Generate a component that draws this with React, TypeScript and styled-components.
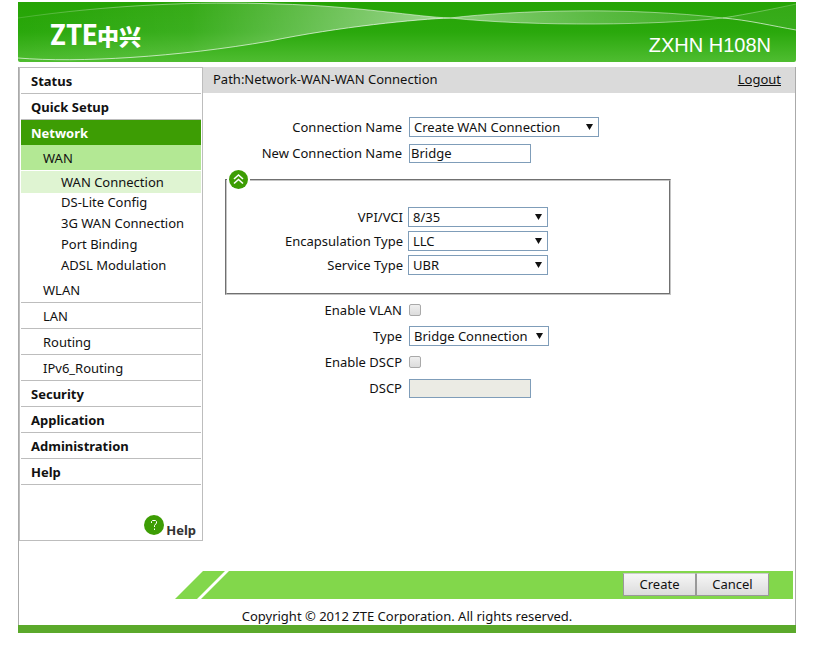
import React from "react";
import styled, { createGlobalStyle, css } from "styled-components";

const GlobalStyle = createGlobalStyle`
  * { box-sizing: border-box; }
  body {
    margin: 0;
    background: #fff;
    color: #111;
    font-family: "Noto Sans", sans-serif;
    font-size: 13px;
    line-height: 18px;
  }
  a { color: inherit; text-decoration: none; }
  ul { list-style: none; margin: 0; padding: 0; }
`;

const Page = styled.div`
  margin: 2px 17px 0 18px;
`;

const Banner = styled.header`
  display: flex;
  justify-content: space-between;
  align-items: flex-end;
  height: 60px;
  padding: 0 25px 0 32px;
  color: #fff;
  background: linear-gradient(#25a304, #2aa80c 50%, #4fbd31);
  border-radius: 0 0 2px 2px;
  position: relative;
  overflow: hidden;
`;

const Waves = styled.svg`
  position: absolute;
  inset: 0;
  width: 100%;
  height: 100%;
`;

const Logo = styled.div`
  display: flex;
  align-items: center;
  align-self: center;
  position: relative;
  height: 36px;
  padding-top: 6px;
`;

const LogoLatin = styled.span`
  font: bold 30px/36px "Roboto Condensed", "Open Sans Condensed", "Noto Sans Condensed", "Noto Sans CJK SC", sans-serif;
`;

const LogoHan = styled.span`
  font: 900 22px/36px "Noto Sans CJK SC", sans-serif;
`;

const Model = styled.div`
  position: relative;
  padding-bottom: 5px;
  font: 20px/24px "Liberation Sans", sans-serif;
`;

const Frame = styled.div`
  margin-top: 5px;
  border: solid #aaa;
  border-width: 0 1px;
`;

const Columns = styled.div`
  display: grid;
  grid-template-columns: 184px 1fr;
  align-items: start;
`;

const Sidebar = styled.nav`
  padding: 0 1px;
  border: 1px solid #bdbdbd;
`;

type Level = "top" | "section" | "page";

const levels = {
  top: css`
    height: 26px;
    padding-left: 10px;
    font-weight: bold;
    border-bottom: 1px solid #bdbdbd;
  `,
  section: css`
    height: 26px;
    padding-left: 22px;
    border-bottom: 1px solid #bdbdbd;
  `,
  page: css`
    height: 21px;
    padding: 0 0 3px 40px;
  `,
};

const actives = {
  top: css`
    height: 25px;
    color: #fff;
    background: #3d9d04;
    border: 0;
  `,
  section: css`
    background: #b3e894;
    border-color: #fff;
  `,
  page: css`
    height: 22px;
    padding-bottom: 0;
    background: #dff4d2;
  `,
};

const NavLink = styled.a<{ $level: Level; $active?: boolean }>`
  display: flex;
  align-items: center;
  ${(p) => levels[p.$level]}
  ${(p) => p.$active && actives[p.$level]}
`;

const HelpLink = styled.a`
  display: flex;
  justify-content: flex-end;
  align-items: flex-end;
  gap: 2px;
  height: 55px;
  padding: 0 5px 1px 0;
  color: #333;
  font-weight: bold;
`;

const HelpIcon = styled.svg`
  width: 20px;
  height: 20px;
  margin-bottom: 4px;
`;

const PathBar = styled.div`
  display: flex;
  justify-content: space-between;
  align-items: center;
  height: 26px;
  padding: 0 14px 2px 10px;
  background: #dadada;
`;

const LogoutLink = styled.a`
  text-decoration: underline;
`;

const Form = styled.form`
  padding-top: 21px;
`;

const Row = styled.div<{ $nested?: boolean }>`
  display: grid;
  align-items: center;
  grid-template-columns: ${(p) => (p.$nested ? "176px 1fr" : "199px 1fr")};
  column-gap: ${(p) => (p.$nested ? 5 : 7)}px;
  height: ${(p) => (p.$nested ? 24 : 26)}px;
`;

const Label = styled.label`
  text-align: right;
`;

const SelectBox = styled.div<{ $wide?: boolean }>`
  position: relative;
  width: ${(p) => (p.$wide ? 190 : 140)}px;
  height: 20px;
`;

const Select = styled.select`
  appearance: none;
  display: block;
  width: 100%;
  height: 100%;
  padding: 0 4px;
  border: 1px solid #7f9db9;
  border-radius: 0;
  background: #fff;
  color: #111;
  font: inherit;
`;

const Arrow = styled.svg`
  position: absolute;
  right: 6px;
  top: 7px;
  width: 7px;
  height: 6px;
  pointer-events: none;
`;

const TextInput = styled.input`
  width: 122px;
  height: 19px;
  padding: 0 1px;
  border: 1px solid #7f9db9;
  background: #fff;
  color: #111;
  font: inherit;
  &:disabled { background: #ebebe4; }
`;

const Checkbox = styled.input`
  appearance: none;
  width: 12px;
  height: 12px;
  margin: 0;
  border: 1px solid #a9a9a9;
  border-radius: 2px;
  background: linear-gradient(#efefef, #dcdcdc);
  &:checked { background: #3d9d04; }
`;

const Group = styled.fieldset`
  width: 446px;
  max-width: calc(100% - 22px);
  margin: 4px 0 2px 22px;
  padding: 16px 0 16px;
  border: 2px groove #c4c4c4;
`;

const Legend = styled.legend`
  padding: 0 2px;
  height: 19px;
`;

const Toggle = styled.button`
  display: block;
  width: 19px;
  height: 19px;
  padding: 0;
  border: 0;
  background: none;
  cursor: pointer;
  svg { display: block; }
`;

const Actions = styled.div`
  display: flex;
  height: 28px;
  margin: 30px 2px 0 156px;
`;

const ActionBar = styled.div`
  flex: 1;
  display: flex;
  justify-content: flex-end;
  align-items: flex-start;
  padding: 2px 24px 0 0;
  background: #82d74b;
`;

const Button = styled.button`
  width: 73px;
  height: 23px;
  padding: 0 0 2px;
  border: 1px solid #999;
  border-top-color: #ccc;
  background: linear-gradient(#f6f6f6, #dcdcdc);
  color: #111;
  font: inherit;
`;

const Copyright = styled.footer`
  padding: 8px 0 0;
  height: 26px;
  text-align: center;
`;

const BottomBar = styled.div`
  height: 8px;
  background: #5ba92b;
`;

const items: { text: string; level: Level; active?: boolean }[] = [
  { text: "Status", level: "top" },
  { text: "Quick Setup", level: "top" },
  { text: "Network", level: "top", active: true },
  { text: "WAN", level: "section", active: true },
  { text: "WAN Connection", level: "page", active: true },
  { text: "DS-Lite Config", level: "page" },
  { text: "3G WAN Connection", level: "page" },
  { text: "Port Binding", level: "page" },
  { text: "ADSL Modulation", level: "page" },
  { text: "WLAN", level: "section" },
  { text: "LAN", level: "section" },
  { text: "Routing", level: "section" },
  { text: "IPv6_Routing", level: "section" },
  { text: "Security", level: "top" },
  { text: "Application", level: "top" },
  { text: "Administration", level: "top" },
  { text: "Help", level: "top" },
];

function SelectRow(props: { id: string; label: string; value: string; wide?: boolean; nested?: boolean }) {
  return (
    <Row $nested={props.nested}>
      <Label htmlFor={props.id}>{props.label}</Label>
      <SelectBox $wide={props.wide}>
        <Select id={props.id} defaultValue={props.value}>
          <option>{props.value}</option>
        </Select>
        <Arrow viewBox="0 0 7 6" aria-hidden="true">
          <path d="M0 0H7L3.5 6Z" fill="#111" />
        </Arrow>
      </SelectBox>
    </Row>
  );
}

function BannerWaves() {
  return (
    <Waves viewBox="0 0 778 60" preserveAspectRatio="none" aria-hidden="true">
      <defs>
        <linearGradient id="ribbon" x1="0" x2="1">
          <stop offset="0" stopColor="#fff" stopOpacity="0" />
          <stop offset="0.4" stopColor="#fff" stopOpacity="0.08" />
          <stop offset="0.65" stopColor="#fff" stopOpacity="0.27" />
          <stop offset="1" stopColor="#fff" stopOpacity="0.55" />
        </linearGradient>
        <linearGradient id="lens" x1="0" x2="1">
          <stop offset="0" stopColor="#fff" stopOpacity="0.45" />
          <stop offset="0.5" stopColor="#fff" stopOpacity="0.25" />
          <stop offset="1" stopColor="#fff" stopOpacity="0.1" />
        </linearGradient>
        <linearGradient id="edge" gradientUnits="userSpaceOnUse" x1="0" y1="0" x2="778" y2="0">
          <stop offset="0" stopColor="#fff" stopOpacity="0.15" />
          <stop offset="0.3" stopColor="#fff" stopOpacity="0.6" />
          <stop offset="0.8" stopColor="#fff" stopOpacity="0.45" />
          <stop offset="0.92" stopColor="#fff" stopOpacity="0.4" />
          <stop offset="1" stopColor="#fff" stopOpacity="0.2" />
        </linearGradient>
      </defs>
      <path d="M0 16C90 3 180 -1 260 2C340 4 400 15 432 16C400 17 320 25 252 39C160 55 60 61 0 56Z" fill="url(#ribbon)" />
      <path d="M432 16C500 8 610 5 705 16C640 23 520 25 432 16Z" fill="url(#lens)" />
      <path d="M705 16C730 12 760 6 778 2V28C755 24 730 18 705 16Z" fill="#fff" fillOpacity="0.07" />
      <g fill="none" stroke="url(#edge)">
        <path d="M0 16C90 3 180 -1 260 2C340 4 400 15 432 16C520 25 640 23 705 16C730 12 760 6 778 2" />
        <path d="M432 16C500 8 610 5 705 16" />
      </g>
      <path d="M705 16C730 18 755 24 778 28M0 56C60 61 160 55 252 39C320 25 400 17 432 16" fill="none" stroke="#fff" strokeOpacity="0.65" />
    </Waves>
  );
}

export default function App() {
  return (
    <>
      <GlobalStyle />
      <Page>
        <Banner>
          <BannerWaves />
          <Logo>
            <LogoLatin>ZTE</LogoLatin>
            <LogoHan>中兴</LogoHan>
          </Logo>
          <Model>ZXHN H108N</Model>
        </Banner>
        <Frame>
          <Columns>
            <Sidebar>
              <ul>
                {items.map((item) => (
                  <li key={item.level + item.text}>
                    <NavLink href="#" $level={item.level} $active={item.active}>
                      {item.text}
                    </NavLink>
                  </li>
                ))}
              </ul>
              <HelpLink href="#">
                <HelpIcon viewBox="0 0 20 20" aria-hidden="true">
                  <circle cx="10" cy="10" r="10" fill="#3d9d04" />
                  <path d="M7.5 8V6.500L8.500 5.500H11.500L12.500 6.500V8L10.500 10.500V12" fill="none" stroke="#fff" />
                  <path d="M10 13.500H11V15H10Z" fill="#fff" />
                </HelpIcon>
                Help
              </HelpLink>
            </Sidebar>
            <main>
              <PathBar>
                <span>Path:Network-WAN-WAN Connection</span>
                <LogoutLink href="#">Logout</LogoutLink>
              </PathBar>
              <Form id="wan" onSubmit={(e) => e.preventDefault()}>
                <SelectRow id="connection" label="Connection Name" value="Create WAN Connection" wide />
                <Row>
                  <Label htmlFor="name">New Connection Name</Label>
                  <TextInput id="name" defaultValue="Bridge" />
                </Row>
                <Group>
                  <Legend>
                    <Toggle type="button" aria-label="Collapse">
                      <svg width="19" height="19" viewBox="0 0 19 19">
                        <circle cx="9.5" cy="9.5" r="9.5" fill="#3d9d04" />
                        <path d="M5 9L9.500 5L14 9M5 13.500L9.500 9.500L14 13.500" fill="none" stroke="#fff" strokeWidth="1.6" />
                      </svg>
                    </Toggle>
                  </Legend>
                  <SelectRow nested id="vpi" label="VPI/VCI" value="8/35" />
                  <SelectRow nested id="encapsulation" label="Encapsulation Type" value="LLC" />
                  <SelectRow nested id="service" label="Service Type" value="UBR" />
                </Group>
                <Row>
                  <Label htmlFor="vlan">Enable VLAN</Label>
                  <Checkbox id="vlan" type="checkbox" />
                </Row>
                <SelectRow id="type" label="Type" value="Bridge Connection" />
                <Row>
                  <Label htmlFor="enable-dscp">Enable DSCP</Label>
                  <Checkbox id="enable-dscp" type="checkbox" />
                </Row>
                <Row>
                  <Label htmlFor="dscp">DSCP</Label>
                  <TextInput id="dscp" disabled />
                </Row>
              </Form>
            </main>
          </Columns>
          <Actions>
            <svg width="54" height="28" viewBox="0 0 54 28" aria-hidden="true">
              <path d="M0 28L28 0H50L22 28ZM26 28L54 0V28Z" fill="#82d74b" />
            </svg>
            <ActionBar>
              <Button type="submit" form="wan">Create</Button>
              <Button type="reset" form="wan">Cancel</Button>
            </ActionBar>
          </Actions>
          <Copyright>Copyright © 2012 ZTE Corporation. All rights reserved.</Copyright>
        </Frame>
        <BottomBar />
      </Page>
    </>
  );
}
